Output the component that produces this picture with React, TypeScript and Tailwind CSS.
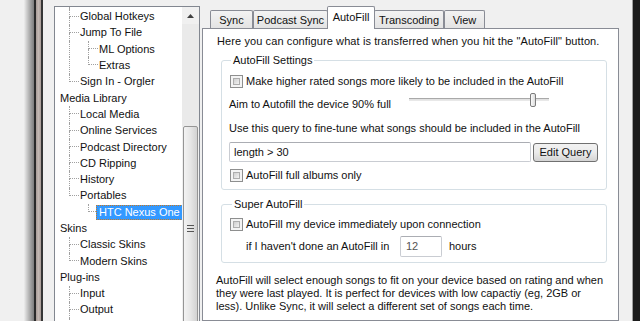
import React from "react";

type Row = {
  label: string;
  level: 0 | 1 | 2;
  l1?: "full" | "half" | "none";
  l2?: "full" | "half";
  selected?: boolean;
};

const rows: Row[] = [
  { label: "Global Hotkeys", level: 1, l1: "full" },
  { label: "Jump To File", level: 1, l1: "full" },
  { label: "ML Options", level: 2, l1: "full", l2: "full" },
  { label: "Extras", level: 2, l1: "full", l2: "half" },
  { label: "Sign In - Orgler", level: 1, l1: "half" },
  { label: "Media Library", level: 0 },
  { label: "Local Media", level: 1, l1: "full" },
  { label: "Online Services", level: 1, l1: "full" },
  { label: "Podcast Directory", level: 1, l1: "full" },
  { label: "CD Ripping", level: 1, l1: "full" },
  { label: "History", level: 1, l1: "full" },
  { label: "Portables", level: 1, l1: "half" },
  { label: "HTC Nexus One", level: 2, l1: "none", l2: "half", selected: true },
  { label: "Skins", level: 0 },
  { label: "Classic Skins", level: 1, l1: "full" },
  { label: "Modern Skins", level: 1, l1: "half" },
  { label: "Plug-ins", level: 0 },
  { label: "Input", level: 1, l1: "full" },
  { label: "Output", level: 1, l1: "full" },
  { label: "", level: 1, l1: "full" },
];

const dot = "border-dotted border-[#a0a0a0]";

function Connector({ full }: { full: boolean }) {
  return (
    <div className="w-[10px] self-stretch flex flex-col shrink-0">
      <div className={`h-[8px] border-l border-b ${dot}`} />
      <div className={`flex-1 ${full ? `border-l ${dot}` : ""}`} />
    </div>
  );
}

function TreeRow({ r }: { r: Row }) {
  if (r.level === 0) {
    return (
      <div className="h-[16.3px] flex items-center pl-[5px] whitespace-nowrap">{r.label}</div>
    );
  }
  return (
    <div className="h-[16.3px] flex items-stretch whitespace-nowrap">
      <div className="w-[14px] shrink-0" />
      {r.level === 1 ? (
        <Connector full={r.l1 === "full"} />
      ) : (
        <>
          <div className={`w-[19px] shrink-0 ${r.l1 === "full" ? `border-l ${dot}` : ""}`} />
          <Connector full={r.l2 === "full"} />
        </>
      )}
      <div className="flex items-center ml-[1px]">
        {r.selected ? (
          <span className="h-[15px] flex items-center px-[2px] -ml-[3px] bg-[#3399ff] text-white border border-dotted border-[#c9781f]">
            {r.label}
          </span>
        ) : (
          r.label
        )}
      </div>
    </div>
  );
}

function Check() {
  return (
    <div className="w-[13px] h-[13px] shrink-0 border border-[#8e8f8f] bg-[#f4f4f4] p-[2px]">
      <div className="w-full h-full border border-[#adadad] bg-linear-to-br from-[#cfcfcf] to-[#f2f2f2]" />
    </div>
  );
}

const tabs = [
  { label: "Sync", w: "w-[43px]" },
  { label: "Podcast Sync", w: "w-[75px]" },
  { label: "AutoFill", w: "w-[48px]", active: true },
  { label: "Transcoding", w: "w-[70px]" },
  { label: "View", w: "w-[41px]" },
];

export default function App() {
  return (
    <div className="w-[640px] h-[321px] flex overflow-hidden bg-[#f0f0f0] font-['Liberation_Sans',sans-serif] text-[11px] leading-[13px] text-[#111]">
      {/* desktop shadow + window frame */}
      <div className="w-[34px] shrink-0 bg-linear-to-r from-[#f0f0f0] from-70% to-[#7d7d7d]" />
      <div className="w-[2px] shrink-0 bg-[#2a2a2a]" />
      <div className="w-[5px] shrink-0 bg-linear-to-r from-[#a99c97] via-[#c3b8b3] to-[#a99c97]" />
      <div className="w-[2px] shrink-0 bg-[#363636]" />

      <div className="flex shrink-0 pl-[11px] pt-[6px]">
        {/* tree */}
        <div className="w-[146px] h-[330px] shrink-0 border border-[#828790] bg-white flex">
          <div className="w-[127px] overflow-hidden">
            <div className={`ml-[14px] h-[1.5px] border-l ${dot}`} />
            {rows.map((r, i) => (
              <TreeRow key={i} r={r} />
            ))}
          </div>
          <div className="w-[17px] shrink-0 bg-[#f0f0f0] flex flex-col">
            <div className="h-[17px] flex items-center justify-center">
              <svg width="7" height="4" viewBox="0 0 7 4">
                <path d="M3.5 0 L7 4 L0 4 Z" fill="#404040" />
              </svg>
            </div>
            <div className="h-[102px] bg-[#eaeaea]" />
            <div className="flex-1 mx-px rounded-[2px] border border-[#959595] bg-linear-to-r from-[#f3f3f3] via-[#e6e6e6] to-[#d2d2d2] flex flex-col items-center">
              <div className="h-[98px]" />
              <div className="flex flex-col gap-[2px]">
                <div className="w-[7px] h-px bg-[#555]" />
                <div className="w-[7px] h-px bg-[#555]" />
                <div className="w-[7px] h-px bg-[#555]" />
              </div>
            </div>
          </div>
        </div>

        {/* tabs + panel */}
        <div className="ml-[2px] w-[417px] shrink-0 flex flex-col">
          <div className="h-[22px] flex items-end pl-[8px]">
            {tabs.map((t) =>
              t.active ? (
                <div
                  key={t.label}
                  className={`${t.w} h-[23px] -mb-px relative z-10 -mx-[1px] bg-white border border-b-0 border-[#898c95] rounded-t-[2px] flex items-start justify-center pt-[4px]`}
                >
                  {t.label}
                </div>
              ) : (
                <div
                  key={t.label}
                  className={`${t.w} h-[18px] bg-linear-to-b from-[#f3f3f3] to-[#e3e3e3] border border-b-0 border-[#898c95] rounded-t-[2px] flex items-center justify-center pt-[1px]`}
                >
                  {t.label}
                </div>
              )
            )}
          </div>
          <div className="flex-1 bg-white border border-[#898c95] pl-[14px] pt-[6px]">
            <p className="whitespace-nowrap tracking-[0.1px]">
              Here you can configure what is transferred when you hit the "AutoFill" button.
            </p>

            <fieldset className="ml-[4px] mt-[6px] w-[386px] border border-[#d5dfe5] rounded-[3px] pl-[7px] pb-[7px]">
              <legend className="ml-[2px] px-[2px]">AutoFill Settings</legend>
              <div className="mt-[8px] flex items-center gap-[3px] pl-px">
                <Check />
                <span>Make higher rated songs more likely to be included in the AutoFill</span>
              </div>
              <div className="mt-[4px] flex items-start">
                <span className="w-[180px] mt-[6px]">Aim to Autofill the device 90% full</span>
                <div className="w-[140px] h-[15px] flex items-center relative">
                  <div className="w-full h-[3px] border-t border-[#a9a9a9] border-b border-b-[#e8e8e8] bg-[#e2e2e2]" />
                  <div className="absolute left-[121px] top-[1px] w-[6px] h-[14px] rounded-[2px] border border-[#7c7c7c] bg-linear-to-r from-[#fafafa] to-[#dcdcdc]" />
                </div>
              </div>
              <p className="mt-[11px] whitespace-nowrap">
                Use this query to fine-tune what songs should be included in the AutoFill
              </p>
              <div className="mt-[7px] flex items-start">
                <div className="w-[302px] h-[20px] border border-[#c9ccd2] border-t-[#abadb3] rounded-[2px] flex items-center pl-[4px]">
                  length &gt; 30
                </div>
                <button className="ml-[2px] mt-px w-[65px] h-[19px] rounded-[3px] border border-[#707070] bg-linear-to-b from-[#f2f2f2] via-[#ebebeb] to-[#d4d4d4] text-[11px] leading-[13px] flex items-center justify-center">
                  Edit Query
                </button>
              </div>
              <div className="mt-[7px] flex items-center gap-[3px] pl-px">
                <Check />
                <span>AutoFill full albums only</span>
              </div>
            </fieldset>

            <fieldset className="ml-[4px] mt-[8px] w-[386px] border border-[#d5dfe5] rounded-[3px] pl-[8px] pb-[5px]">
              <legend className="ml-[2px] px-[2px]">Super AutoFill</legend>
              <div className="mt-[7px] flex items-center gap-[3px]">
                <Check />
                <span>AutoFill my device immediately upon connection</span>
              </div>
              <div className="mt-[5px] flex items-center pl-[16px]">
                <span className="w-[154px]">if I haven't done an AutoFill in</span>
                <div className="w-[42px] h-[21px] border border-[#c9ccd2] border-t-[#abadb3] rounded-[2px] flex items-center pl-[5px] text-[#555]">
                  12
                </div>
                <span className="ml-[7px]">hours</span>
              </div>
            </fieldset>

            <p className="mt-[11px] -ml-[1px] whitespace-nowrap">
              AutoFill will select enough songs to fit on your device based on rating and when
              <br />
              they were last played. It is perfect for devices with low capactiy (eg, 2GB or
              <br />
              less). Unlike Sync, it will select a different set of songs each time.
            </p>
          </div>
        </div>
      </div>

      <div className="w-[13px] shrink-0" />
      <div className="w-px shrink-0 bg-[#a0a0a0]" />
      <div className="w-[7px] shrink-0 bg-[#1c1c1c]" />
    </div>
  );
}
